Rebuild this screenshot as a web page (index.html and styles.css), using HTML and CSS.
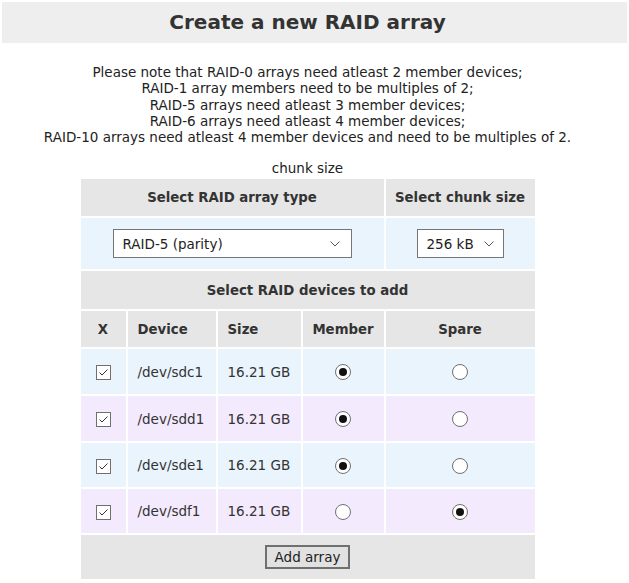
FILE: index.html
```html
<!DOCTYPE html>
<html>
<head>
<meta charset="utf-8">
<link rel="stylesheet" href="styles.css">
</head>
<body>
<div class="page">
  <h1 class="title">Create a new RAID array</h1>
  <div class="content">
    <p class="notes">Please note that RAID-0 arrays need atleast 2 member devices;<br>RAID-1 array members need to be multiples of 2;<br>RAID-5 arrays need atleast 3 member devices;<br>RAID-6 arrays need atleast 4 member devices;<br>RAID-10 arrays need atleast 4 member devices and need to be multiples of 2.</p>
    <table class="raid">
      <caption>chunk size</caption>
      <colgroup>
        <col class="c-x"><col class="c-dev"><col class="c-size"><col class="c-mem"><col class="c-spare">
      </colgroup>
      <tr class="h1row">
        <th colspan="4">Select RAID array type</th>
        <th>Select chunk size</th>
      </tr>
      <tr class="selrow blue">
        <td colspan="4" class="center">
          <div class="select wide"><span>RAID-5 (parity)</span><svg class="chev" width="12" height="8" viewBox="0 0 12 8"><path d="M1.5 1.5 L6 6 L10.5 1.5" fill="none" stroke="#555" stroke-width="1"/></svg></div>
        </td>
        <td class="center">
          <div class="select narrow"><span>256 kB</span><svg class="chev" width="12" height="8" viewBox="0 0 12 8"><path d="M1.5 1.5 L6 6 L10.5 1.5" fill="none" stroke="#555" stroke-width="1"/></svg></div>
        </td>
      </tr>
      <tr class="h2row">
        <th colspan="5">Select RAID devices to add</th>
      </tr>
      <tr class="h3row">
        <th>X</th>
        <th class="left">Device</th>
        <th class="left">Size</th>
        <th>Member</th>
        <th>Spare</th>
      </tr>
      <tr class="drow r45 blue">
        <td class="center"><span class="chk"><svg width="15" height="15" viewBox="0 0 15 15"><rect x="0.5" y="0.5" width="14" height="14" fill="#fff" stroke="#707070"/><path d="M3.5 7.5 L6 10 L11.5 4.5" fill="none" stroke="#333" stroke-width="1"/></svg></span></td>
        <td class="left">/dev/sdc1</td>
        <td class="left">16.21 GB</td>
        <td class="center"><span class="radio on"></span></td>
        <td class="center"><span class="radio"></span></td>
      </tr>
      <tr class="drow r45 lav">
        <td class="center"><span class="chk"><svg width="15" height="15" viewBox="0 0 15 15"><rect x="0.5" y="0.5" width="14" height="14" fill="#fff" stroke="#707070"/><path d="M3.5 7.5 L6 10 L11.5 4.5" fill="none" stroke="#333" stroke-width="1"/></svg></span></td>
        <td class="left">/dev/sdd1</td>
        <td class="left">16.21 GB</td>
        <td class="center"><span class="radio on"></span></td>
        <td class="center"><span class="radio"></span></td>
      </tr>
      <tr class="drow r44 blue">
        <td class="center"><span class="chk"><svg width="15" height="15" viewBox="0 0 15 15"><rect x="0.5" y="0.5" width="14" height="14" fill="#fff" stroke="#707070"/><path d="M3.5 7.5 L6 10 L11.5 4.5" fill="none" stroke="#333" stroke-width="1"/></svg></span></td>
        <td class="left">/dev/sde1</td>
        <td class="left">16.21 GB</td>
        <td class="center"><span class="radio on"></span></td>
        <td class="center"><span class="radio"></span></td>
      </tr>
      <tr class="drow r44 lav">
        <td class="center"><span class="chk"><svg width="15" height="15" viewBox="0 0 15 15"><rect x="0.5" y="0.5" width="14" height="14" fill="#fff" stroke="#707070"/><path d="M3.5 7.5 L6 10 L11.5 4.5" fill="none" stroke="#333" stroke-width="1"/></svg></span></td>
        <td class="left">/dev/sdf1</td>
        <td class="left">16.21 GB</td>
        <td class="center"><span class="radio"></span></td>
        <td class="center"><span class="radio on"></span></td>
      </tr>
      <tr class="btnrow">
        <td colspan="5" class="center"><button class="btn">Add array</button></td>
      </tr>
    </table>
  </div>
</div>
</body>
</html>
```
FILE: styles.css
```css
html, body {
  margin: 0;
  padding: 0;
  background: #fff;
}
body {
  font-family: "DejaVu Sans", Verdana, sans-serif;
  font-size: 13.5px;
  color: #333;
}
.page {
  padding: 2px;
}
.title {
  margin: 0;
  width: 625px;
  box-sizing: border-box;
  padding-right: 14px;
  background: #eeeeee;
  height: 41px;
  line-height: 41px;
  font-size: 20px;
  font-weight: bold;
  text-align: center;
  color: #333;
}
.content {
  width: 611px;
}
.notes {
  margin: 21px 0 0 0;
  text-align: center;
  line-height: 16.25px;
  color: #222;
}
.raid {
  margin: 15px auto 0 auto;
  border-collapse: separate;
  border-spacing: 2px;
  color: #333;
}
.raid caption {
  line-height: 16px;
  height: 17px;
  color: #222;
}
.c-x { width: 45px; }
.c-dev { width: 88px; }
.c-size { width: 83px; }
.c-mem { width: 81px; }
.c-spare { width: 149px; }
.raid th, .raid td {
  padding: 0;
  font-size: 13.5px;
}
.raid th {
  background: #e6e6e6;
  font-weight: bold;
  font-size: 13.3px;
  text-align: center;
}
.raid .left {
  text-align: left;
  padding-left: 10px;
}
.raid .center {
  text-align: center;
}
.h1row th { height: 37px; }
.selrow td { height: 51px; }
.h2row th { height: 38px; }
.h3row th { height: 36px; }
.r45 td { height: 45px; }
.r44 td { height: 44px; }
.btnrow td {
  height: 44px;
  background: #e6e6e6;
}
.blue td { background: #eaf4fd; }
.lav td { background: #f4eafd; }
.select {
  display: inline-flex;
  align-items: center;
  justify-content: space-between;
  box-sizing: border-box;
  height: 29px;
  border: 1px solid #767676;
  background: #fff;
  padding: 0 10px 0 9px;
  vertical-align: middle;
  color: #222;
  text-align: left;
}
.select.wide { width: 239px; }
.select.narrow { width: 87px; padding-right: 8px; }
.chev { display: block; }
.chk {
  display: inline-block;
  width: 15px;
  height: 15px;
  vertical-align: middle;
}
.chk svg { display: block; }
.radio {
  display: inline-block;
  box-sizing: border-box;
  width: 16px;
  height: 16px;
  border: 1px solid #707070;
  border-radius: 50%;
  background: #fff;
  vertical-align: middle;
  position: relative;
}
.radio.on::after {
  content: "";
  position: absolute;
  left: 3px;
  top: 3px;
  width: 8px;
  height: 8px;
  border-radius: 50%;
  background: #111;
}
.btn {
  font-family: "DejaVu Sans", Verdana, sans-serif;
  font-size: 13.5px;
  color: #222;
  background: #e1e1e1;
  border: 2px solid #707070;
  height: 24px;
  padding: 0 8px;
  border-radius: 0;
  vertical-align: middle;
}
```
